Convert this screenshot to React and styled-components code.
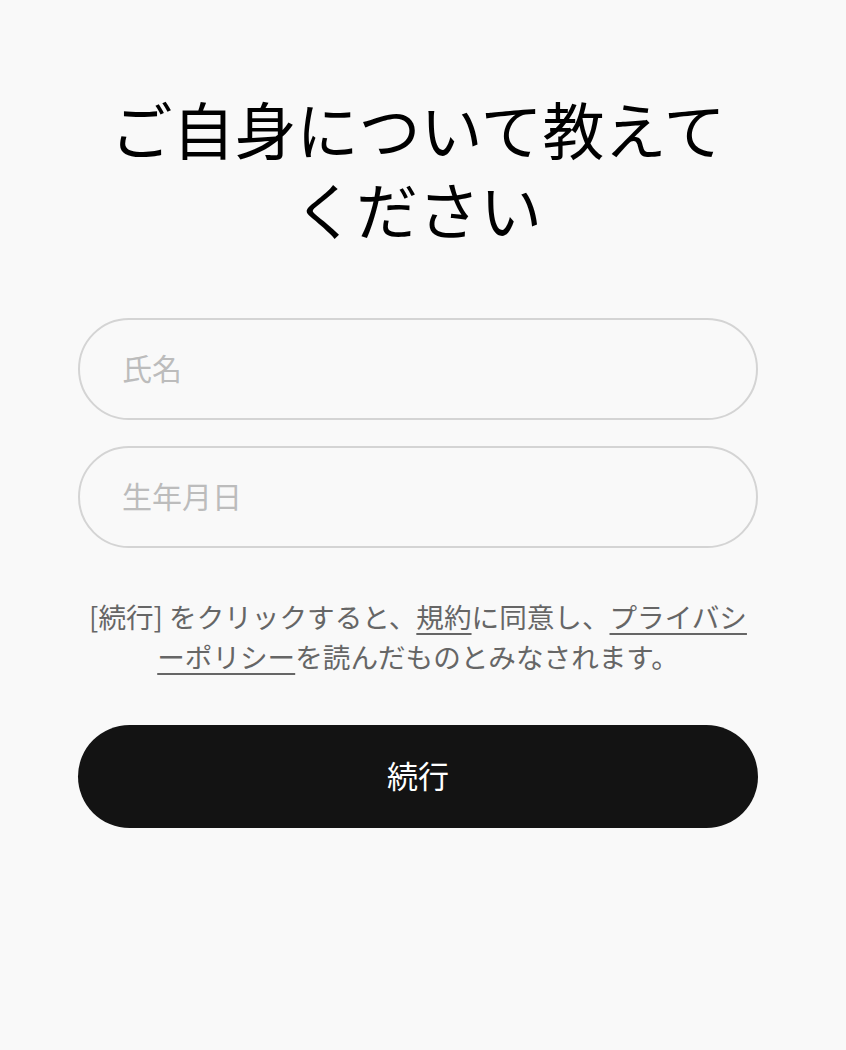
import React from "react";
import styled, { createGlobalStyle } from "styled-components";

const GlobalStyle = createGlobalStyle`
  html, body {
    margin: 0;
    padding: 0;
    background: #f9f9f9;
  }
  body {
    font-family: "Noto Sans CJK JP", "Noto Sans", sans-serif;
  }
  * {
    box-sizing: border-box;
  }
`;

const Page = styled.div`
  min-height: 1050px;
  padding: 88px 0 0 78px;
`;

const Form = styled.form`
  width: 680px;
  display: flex;
  flex-direction: column;
`;

const Title = styled.h1`
  margin: 0 0 70px;
  padding: 0 24px;
  font-size: 62px;
  line-height: 80px;
  font-weight: 400;
  color: #000;
  text-align: center;
`;

const Fields = styled.div`
  display: flex;
  flex-direction: column;
  gap: 26px;
`;

const Field = styled.input`
  width: 100%;
  height: 102px;
  padding: 0 42px 5px;
  border: 2px solid #d4d4d4;
  border-radius: 51px;
  background: transparent;
  font-family: inherit;
  font-size: 30px;
  color: #222;
  outline: none;

  &::placeholder {
    color: #bcbcbc;
  }
`;

const Terms = styled.p`
  margin: 48px 0 49px;
  font-size: 27.6px;
  line-height: 40px;
  color: #666;
  text-align: center;
  line-break: loose;
`;

const TermsLink = styled.a`
  color: #666;
  text-decoration: underline;
  text-underline-offset: 5px;
  text-decoration-thickness: 2px;
`;

const SubmitButton = styled.button`
  width: 100%;
  height: 103px;
  padding: 0 0 4px;
  border: none;
  border-radius: 52px;
  background: #131313;
  color: #fff;
  font-family: inherit;
  font-size: 31px;
  cursor: pointer;
`;

export default function App() {
  return (
    <>
      <GlobalStyle />
      <Page>
        <Form onSubmit={e => e.preventDefault()}>
          <Title>ご自身について教えてください</Title>
          <Fields>
            <Field type="text" placeholder="氏名" />
            <Field type="text" placeholder="生年月日" />
          </Fields>
          <Terms>
            [続行] をクリックすると、<TermsLink href="#">規約</TermsLink>に同意し、
            <TermsLink href="#">プライバシーポリシー</TermsLink>を読んだものとみなされます。
          </Terms>
          <SubmitButton type="submit">続行</SubmitButton>
        </Form>
      </Page>
    </>
  );
}
